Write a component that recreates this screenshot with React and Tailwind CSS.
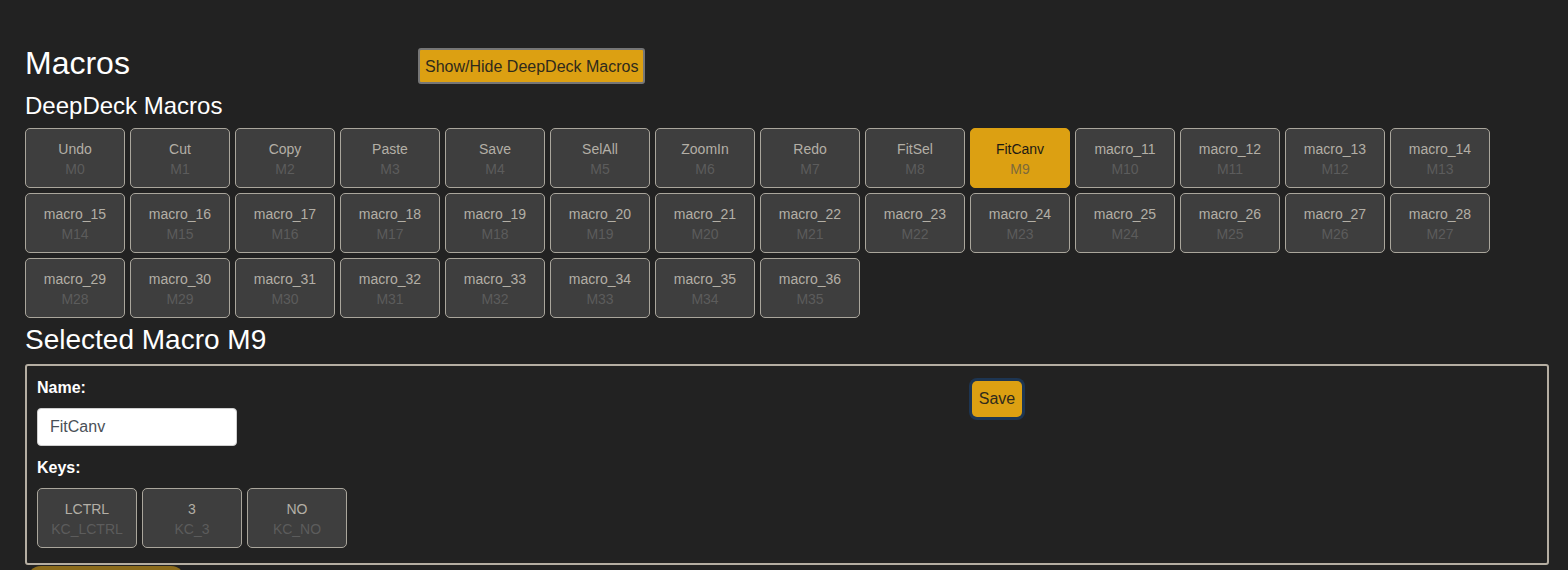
import React, { useState } from 'react';

const macroNames = [
  'Undo', 'Cut', 'Copy', 'Paste', 'Save', 'SelAll', 'ZoomIn', 'Redo', 'FitSel', 'FitCanv',
];
const macros = Array.from({ length: 36 }, (_, i) => ({
  id: `M${i}`,
  name: macroNames[i] || `macro_${i + 1}`,
}));

const keys = [
  { label: 'LCTRL', code: 'KC_LCTRL' },
  { label: '3', code: 'KC_3' },
  { label: 'NO', code: 'KC_NO' },
];

const KeyButton = ({ label, sub, active, onClick }) => (
  <button
    onClick={onClick}
    className={`w-[100px] h-[60px] pt-[2px] rounded-[5px] border flex flex-col items-center justify-center text-[14px] leading-[20px] ${
      active
        ? 'bg-[#dca012] border-[#dca012] text-[#1c1a14]'
        : 'bg-[#3e3e3e] border-[#aaa69c] text-[#b3afa6]'
    }`}
  >
    <span>{label}</span>
    <span className={active ? 'text-[#7d6a3c]' : 'text-[#5c5c5c]'}>{sub}</span>
  </button>
);

export default function App() {
  const [selected, setSelected] = useState(9);
  const current = macros[selected];

  return (
    <div className="min-h-screen bg-[#222222] pl-[25px] pr-[19px] pt-[44px] font-['Liberation_Sans',Arial,sans-serif]">
      {/* Header */}
      <div className="flex items-start">
        <h2 className="w-[393px] text-[32px] leading-[38px] text-white">Macros</h2>
        <button className="mt-[4px] h-[36px] px-[5px] pt-[2px] rounded-[3px] border-2 border-[#767676] bg-[#dca012] text-[16px] text-[#2f2a1c]">
          Show/Hide DeepDeck Macros
        </button>
      </div>

      <h3 className="mt-[7px] text-[24px] leading-[29px] text-white">DeepDeck Macros</h3>

      {/* Macro grid */}
      <div className="mt-[8px] grid grid-cols-[repeat(14,100px)] gap-[5px]">
        {macros.map((m, i) => (
          <KeyButton
            key={m.id}
            label={m.name}
            sub={m.id}
            active={i === selected}
            onClick={() => setSelected(i)}
          />
        ))}
      </div>

      <h3 className="mt-[5px] text-[28px] leading-[34px] text-white">Selected Macro {current.id}</h3>

      {/* Editor */}
      <div className="mt-[7px] border-2 border-[#b5aea2] rounded-[3px] px-[10px] pt-[12px] pb-[15px] flex">
        <div className="w-[935px]">
          <label className="block text-[16px] leading-[19px] font-bold text-white">Name:</label>
          <input
            defaultValue={current.name}
            className="mt-[11px] block w-[200px] h-[38px] rounded-[4px] border border-[#cfcfcf] bg-white px-[12px] text-[16px] text-[#495057] outline-none"
          />
          <label className="mt-[12px] block text-[16px] leading-[19px] font-bold text-white">Keys:</label>
          <div className="mt-[11px] flex gap-[5px]">
            {keys.map((k) => (
              <KeyButton key={k.code} label={k.label} sub={k.code} />
            ))}
          </div>
        </div>
        <div>
          <button className="mt-[3px] h-[36px] w-[50px] rounded-[5px] bg-[#dca012] text-[16px] text-[#2f2a1c] shadow-[0_0_0_3px_#1d3552]">
            Save
          </button>
        </div>
      </div>

      <div className="mt-[1px] ml-[2px] w-[158px] h-[40px] rounded-[14px] bg-[#8c6c1c]" />
    </div>
  );
}
